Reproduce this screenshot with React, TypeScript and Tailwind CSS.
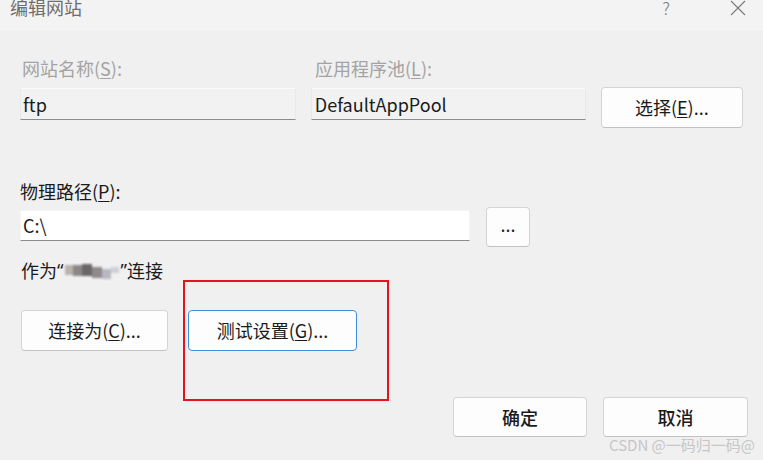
import React from "react";

const font = { fontFamily: '"Noto Sans CJK SC", "Noto Sans", sans-serif' };

const Btn = ({ children, className = "" }: { children: React.ReactNode; className?: string }) => (
  <div
    className={`flex items-center justify-center rounded-[4px] border border-[#d4d4d4] border-b-[#c2c2c2] bg-[#fdfdfd] text-[18px] text-[#1b1b1b] ${className}`}
  >
    {children}
  </div>
);

export default function App() {
  return (
    <div className="relative w-[763px] h-[460px] overflow-hidden bg-[#f0f0f0]" style={font}>
      {/* title bar */}
      <div className="h-[31px] bg-[#f3f3f3] flex items-start justify-between">
        <span className="ml-[10px] -mt-[6px] text-[18px] text-[#6e6e6e]">编辑网站</span>
        <div className="flex items-start -mt-[5px] text-[#7a7a7a]">
          <span className="text-[17px] font-light mr-[60px]">?</span>
          <svg width="16" height="16" viewBox="0 0 16 16" className="mt-[5px] mr-[17px]">
            <path d="M1 1 L15 15 M15 1 L1 15" stroke="#7a7a7a" strokeWidth="1.1" fill="none" />
          </svg>
        </div>
      </div>

      <div className="px-[20px]">
        {/* site name / app pool */}
        <div className="flex mt-[24px] text-[18px] text-[#a3a3a3] leading-[26px]">
          <span className="w-[292px] pl-[2px]">
            网站名称(<span className="underline underline-offset-2">S</span>):
          </span>
          <span className="pl-[3px]">
            应用程序池(<span className="underline underline-offset-2">L</span>):
          </span>
        </div>
        <div className="flex items-start mt-[7px]">
          <div className="w-[277px] h-[32px] bg-[#f2f2f2] border border-[#e8e8e8] border-t-[#fafafa] border-b-[#8c8c8c] flex items-center pl-[2px] text-[18px] text-[#1b1b1b]">
            ftp
          </div>
          <div className="ml-[15px] w-[276px] h-[32px] bg-[#f2f2f2] border border-[#e8e8e8] border-t-[#fafafa] border-b-[#8c8c8c] flex items-center pl-[3px] text-[18px] text-[#1b1b1b]">
            DefaultAppPool
          </div>
          <Btn className="ml-[15px] -mt-[1px] w-[143px] h-[41px]">
            选择(<span className="underline underline-offset-2">E</span>)...
          </Btn>
        </div>

        {/* physical path */}
        <div className="mt-[50px] text-[18px] text-[#1b1b1b] leading-[26px]">
          物理路径(<span className="underline underline-offset-2">P</span>):
        </div>
        <div className="flex items-start mt-[6px]">
          <div className="w-[450px] h-[31px] bg-white border border-[#f4f4f4] border-b-[#8c8c8c] flex items-center pl-[2px] text-[18px] text-[#1b1b1b]">
            C:\
          </div>
          <Btn className="ml-[16px] -mt-[3px] w-[44px] h-[40px] pb-[6px]">...</Btn>
        </div>

        {/* connect as */}
        <div className="mt-[10px] flex items-center text-[18px] text-[#1b1b1b] leading-[26px]">
          <span className="pl-[1px]">作为</span>
          <span style={{ fontFamily: '"Noto Sans", sans-serif' }}>“</span>
          <span className="flex items-center blur-[1px] ml-[2px]">
            <span className="w-[8px] h-[10px] bg-[#b9b3aa]" />
            <span className="w-[9px] h-[11px] bg-[#8c8888]" />
            <span className="w-[10px] h-[12px] bg-[#6a6566]" />
            <span className="w-[10px] h-[11px] bg-[#8e8a8b] mt-[4px]" />
            <span className="w-[9px] h-[10px] bg-[#b9b8c2] mt-[8px]" />
            <span className="w-[8px] h-[6px] bg-[#cfd0da]" />
          </span>
          <span className="ml-[1px]" style={{ fontFamily: '"Noto Sans", sans-serif' }}>”</span>
          <span>连接</span>
        </div>

        {/* connect / test buttons */}
        <div className="flex mt-[27px]">
          <Btn className="ml-[1px] w-[147px] h-[41px]">
            连接为(<span className="underline underline-offset-2">C</span>)...
          </Btn>
          <Btn className="ml-[20px] w-[169px] h-[41px] !border-[#3f8fdc]">
            测试设置(<span className="underline underline-offset-2">G</span>)...
          </Btn>
        </div>

        {/* ok / cancel */}
        <div className="flex justify-end mt-[46px] mr-[-5px]">
          <Btn className="w-[134px] h-[40px] font-medium">确定</Btn>
          <Btn className="ml-[16px] w-[145px] h-[40px] font-medium">取消</Btn>
        </div>
      </div>

      {/* red annotation */}
      <div className="absolute left-[183px] top-[280px] w-[206px] h-[121px] border-2 border-[#e5141c]" />

      {/* watermark */}
      <div className="absolute right-[8px] top-[434px] text-[15px] text-[#c6c6c6]">
        CSDN @一码归一码@
      </div>
    </div>
  );
}
